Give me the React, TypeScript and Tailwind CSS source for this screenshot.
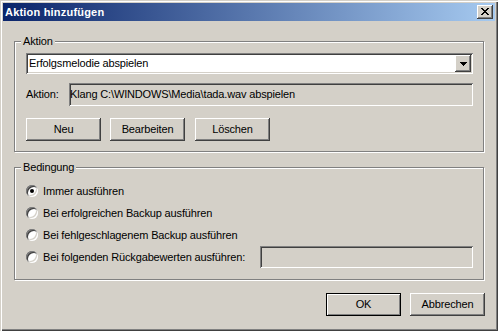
import React from "react";

const raised =
  "shadow-[inset_-1px_-1px_0_#404040,inset_1px_1px_0_#fff,inset_-2px_-2px_0_#808080,inset_2px_2px_0_#d4d0c8]";
const sunken =
  "shadow-[inset_1px_1px_0_#808080,inset_-1px_-1px_0_#fff,inset_2px_2px_0_#404040,inset_-2px_-2px_0_#d4d0c8]";

function Button({ label, isDefault, className = "" }: { label: string; isDefault?: boolean; className?: string }) {
  if (isDefault) {
    return (
      <div className={"w-[75px] h-[23px] border border-black " + className}>
        <div className="w-full h-full flex items-center justify-center leading-[13px] shadow-[inset_1px_1px_0_#fff,inset_-1px_-1px_0_#808080]">
          {label}
        </div>
      </div>
    );
  }
  return (
    <div
      className={
        "w-[75px] h-[23px] flex items-center justify-center leading-[13px] shadow-[inset_-1px_-1px_0_#404040,inset_1px_1px_0_#fff,inset_-2px_-2px_0_#808080,inset_2px_2px_0_#d4d0c8] " +
        className
      }
    >
      {label}
    </div>
  );
}

function Radio({ checked }: { checked?: boolean }) {
  return (
    <div className="w-[12px] h-[12px] shrink-0 rounded-full bg-white flex items-center justify-center shadow-[inset_1px_1px_0_#808080,inset_-1px_-1px_0_#fff,inset_2px_2px_0_#404040,inset_-2px_-2px_0_#d4d0c8]">
      {checked && <div className="w-[4px] h-[4px] rounded-full bg-black" />}
    </div>
  );
}

export default function App() {
  return (
    <div className="w-[498px] h-[331px] bg-[#d4d0c8] p-[3px] flex flex-col text-[11px] tracking-[-0.15px] text-black font-['Liberation_Sans',Arial,sans-serif] shadow-[inset_1px_1px_0_#d4d0c8,inset_2px_2px_0_#fff,inset_-1px_-1px_0_#404040,inset_-2px_-2px_0_#808080]">
      {/* Title bar */}
      <div className="h-[18px] shrink-0 flex items-center justify-between pl-[2px] pr-[2px] bg-[linear-gradient(to_right,#0a246a,#a6caf0)]">
        <span className="font-bold text-white leading-[13px] tracking-[0.2px]">Aktion hinzufügen</span>
        <div className={"w-[16px] h-[14px] bg-[#d4d0c8] pt-[3px] pl-[4px] " + raised}>
          <svg width="8" height="7" viewBox="0 0 8 7" shapeRendering="crispEdges" className="block">
            <path
              d="M0 0h2v1H0zM6 0h2v1H6zM1 1h2v1H1zM5 1h2v1H5zM2 2h4v1H2zM3 3h2v1H3zM2 4h4v1H2zM1 5h2v1H1zM5 5h2v1H5zM0 6h2v1H0zM6 6h2v1H6z"
              fill="#000"
            />
          </svg>
        </div>
      </div>

      {/* Group Aktion */}
      <div className="mt-[20px] mx-[11px] h-[111px] shrink-0 relative border border-[#808080] shadow-[1px_1px_0_#fff,inset_1px_1px_0_#fff] pt-[11px] pl-[11px] pr-[10px] flex flex-col">
        <span className="absolute left-[6px] top-[-7px] px-[2px] bg-[#d4d0c8] leading-[13px]">Aktion</span>
        <div className={"h-[21px] bg-white p-[2px] flex items-center " + sunken}>
          <span className="flex-1 pl-[1px] leading-[13px]">Erfolgsmelodie abspielen</span>
          <div className={"w-[16px] h-[17px] bg-[#d4d0c8] flex items-center justify-center " + raised}>
            <svg width="7" height="4" viewBox="0 0 7 4" shapeRendering="crispEdges" className="block">
              <path d="M0 0h7v1H0zM1 1h5v1H1zM2 2h3v1H2zM3 3h1v1H3z" fill="#000" />
            </svg>
          </div>
        </div>
        <div className="mt-[9px] h-[23px] flex items-center">
          <span className="w-[43px] leading-[13px]">Aktion:</span>
          <div className={"flex-1 h-[23px] bg-[#d4d0c8] pl-[1px] flex items-center leading-[13px] " + sunken}>
            Klang C:\WINDOWS\Media\tada.wav abspielen
          </div>
        </div>
        <div className="mt-[12px] flex gap-[9px]">
          <Button label="Neu" />
          <Button label="Bearbeiten" />
          <Button label="Löschen" className="ml-[1px]" />
        </div>
      </div>

      {/* Group Bedingung */}
      <div className="mt-[15px] mx-[11px] h-[113px] shrink-0 relative border border-[#808080] shadow-[1px_1px_0_#fff,inset_1px_1px_0_#fff] pt-[12px] pl-[11px] pr-[10px] flex flex-col">
        <span className="absolute left-[6px] top-[-7px] px-[2px] bg-[#d4d0c8] leading-[13px]">Bedingung</span>
        <div className="h-[22px] flex items-center gap-[5px]">
          <Radio checked />
          <span className="leading-[13px]">Immer ausführen</span>
        </div>
        <div className="h-[22px] flex items-center gap-[5px]">
          <Radio />
          <span className="leading-[13px]">Bei erfolgreichen Backup ausführen</span>
        </div>
        <div className="h-[22px] flex items-center gap-[5px]">
          <Radio />
          <span className="leading-[13px]">Bei fehlgeschlagenem Backup ausführen</span>
        </div>
        <div className="h-[22px] flex items-center gap-[5px]">
          <Radio />
          <span className="leading-[13px]">Bei folgenden Rückgabewerten ausführen:</span>
          <div className={"ml-auto w-[213px] h-[22px] bg-[#d4d0c8] " + sunken} />
        </div>
      </div>

      {/* Bottom buttons */}
      <div className="mt-[13px] mr-[10px] flex justify-end gap-[9px]">
        <Button label="OK" isDefault />
        <Button label="Abbrechen" />
      </div>
    </div>
  );
}
